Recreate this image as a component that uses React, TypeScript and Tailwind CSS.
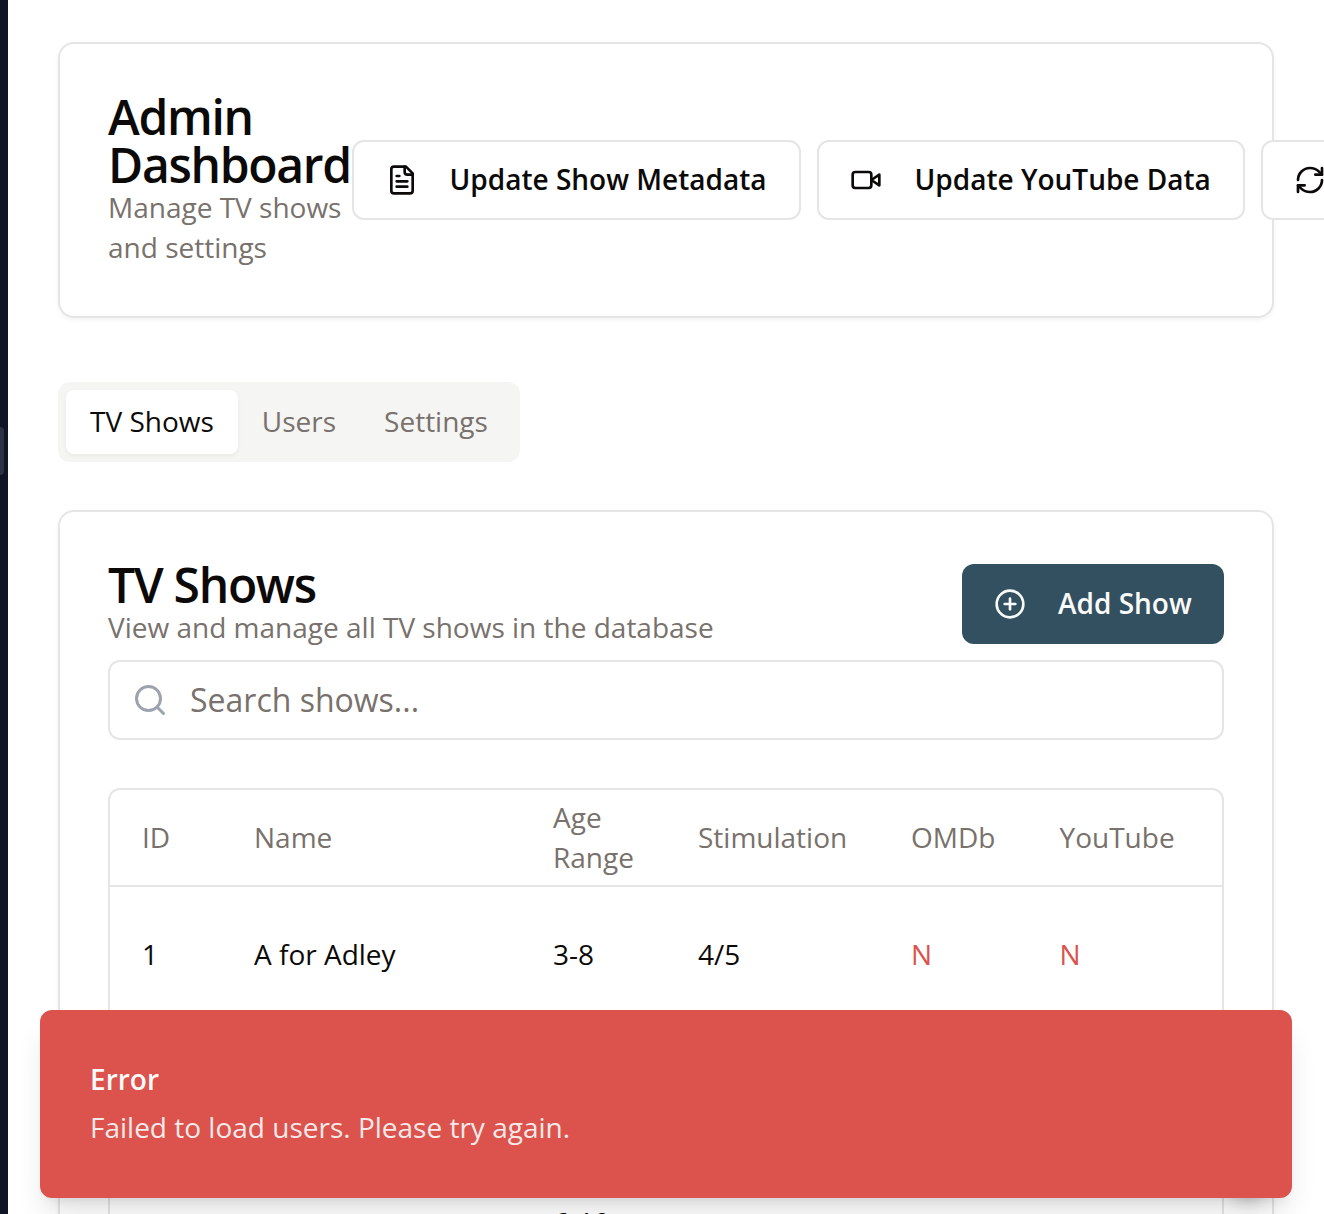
import React from "react";
import { CirclePlus, RefreshCw, Search } from "lucide-react";

const tabs = ["TV Shows", "Users", "Settings"];
const columns = ["ID", "Name", "Age Range", "Stimulation", "OMDb", "YouTube"];
const rows = [
  { height: "h-[137px]", cells: ["1", "A for Adley", "3-8", "4/5", "N", "N"] },
  { height: "h-[131px]", cells: ["", "", "", "", "", ""] },
  { height: "h-[137px]", cells: ["", "", "6-10", "", "", ""] },
];

const grid = "grid grid-cols-[112px_299px_145px_213px_148.5px_1fr] items-center pb-0.5";

function Icon({ children }: { children: React.ReactNode }) {
  return (
    <svg width="32" height="32" viewBox="0 0 24 24" fill="none" stroke="currentColor" strokeWidth="2" strokeLinecap="round" strokeLinejoin="round">
      {children}
    </svg>
  );
}

function DocumentIcon() {
  return (
    <Icon>
      <path d="M15 2H6a2 2 0 0 0-2 2v16a2 2 0 0 0 2 2h12a2 2 0 0 0 2-2V7Z" />
      <path d="M14 2v4a2 2 0 0 0 2 2h4" />
      <path d="M10 9H8M16 13H8M16 17H8" />
    </Icon>
  );
}

function CameraIcon() {
  return (
    <Icon>
      <path d="m22 8-6 4 6 4V8Z" />
      <rect x="2" y="6" width="14" height="12" rx="2" />
    </Icon>
  );
}

function OutlineButton({ icon, label, className }: { icon: React.ReactNode; label: string; className: string }) {
  return (
    <button className={`flex h-20 shrink-0 items-center rounded-xl border-2 border-[#e5e5e5] bg-white font-semibold whitespace-nowrap ${className}`}>
      {icon}
      <span className="pb-0.5">{label}</span>
    </button>
  );
}

function Heading({ title, subtitle }: { title: string; subtitle: string }) {
  return (
    <>
      <h1 className="pt-px text-[48px] leading-[48px] font-semibold tracking-[-1.3px]">{title}</h1>
      <p className="-mt-0.5 mb-px text-[#78716c]">{subtitle}</p>
    </>
  );
}

export default function App() {
  return (
    <div className="relative flex h-[1214px] w-[1324px] overflow-hidden bg-white font-['Open_Sans',sans-serif] text-[28px] leading-10 text-[#0c0a09]">
      <aside className="flex w-2 shrink-0 bg-[#0f1525] pt-[427px]">
        <div className="h-12 w-1 rounded-r-sm bg-[#2b3245]" />
      </aside>

      <main className="flex w-[1316px] shrink-0 flex-col pt-[42px] pl-[50px]">
        <section className="flex h-[276px] w-[1216px] shrink-0 items-center rounded-2xl border-2 border-[#e5e5e5] px-12 shadow-[0_2px_4px_rgba(0,0,0,0.05)]">
          <div className="w-[244px] shrink-0">
            <Heading title="Admin Dashboard" subtitle="Manage TV shows and settings" />
          </div>
          <div className="flex gap-4">
            <OutlineButton icon={<DocumentIcon />} label="Update Show Metadata" className="w-[449px] gap-[31.5px] pl-8" />
            <OutlineButton icon={<CameraIcon />} label="Update YouTube Data" className="w-[428px] gap-[32.5px] pl-[31px]" />
            <OutlineButton icon={<RefreshCw size={32} strokeWidth={2} />} label="Refresh" className="w-[240px] gap-8 pl-[31px]" />
          </div>
        </section>

        <nav className="mt-16 flex h-20 w-[462px] shrink-0 items-center rounded-xl bg-[#f5f5f4] p-2">
          {tabs.map((tab, i) => (
            <button
              key={tab}
              className={i === 0 ? "h-16 rounded-lg bg-white px-6 pb-0.5 shadow-[0_2px_4px_rgba(0,0,0,0.05)]" : "h-16 px-6 pb-0.5 text-[#78716c]"}
            >
              {tab}
            </button>
          ))}
        </nav>

        <section className="mt-12 h-[900px] w-[1216px] shrink-0 rounded-2xl border-2 border-[#e5e5e5] px-12 pt-12 shadow-[0_2px_4px_rgba(0,0,0,0.05)]">
          <div className="flex h-[88px] items-center justify-between">
            <div>
              <Heading title="TV Shows" subtitle="View and manage all TV shows in the database" />
            </div>
            <button className="flex h-20 w-[262px] items-center gap-8 rounded-xl bg-[#335061] pl-8 font-semibold text-[#fafaf9]">
              <CirclePlus size={32} strokeWidth={2} />
              <span className="pb-0.5">Add Show</span>
            </button>
          </div>

          <div className="mt-3 flex h-20 items-center rounded-xl border-2 border-[#e5e5e5] pl-[22px]">
            <Search size={36} className="text-[#9ca3af]" />
            <span className="ml-[22px] text-[32px] text-[#78716c]">Search shows...</span>
          </div>

          <div className="mt-12 h-[600px] rounded-xl border-2 border-[#e5e5e5]">
            <div className={`${grid} h-[97px] border-b-2 border-[#e5e5e5] text-[#78716c]`}>
              {columns.map((c) => (
                <div key={c} className="px-8">{c}</div>
              ))}
            </div>
            {rows.map((row, r) => (
              <div key={r} className={`${grid} ${row.height} border-b-2 border-[#e5e5e5]`}>
                {row.cells.map((cell, i) => (
                  <div key={i} className={i > 3 ? "px-8 text-[#dc524d]" : "px-8"}>{cell}</div>
                ))}
              </div>
            ))}
          </div>
        </section>
      </main>

      <div className="absolute top-[1170px] left-[1232px] h-6 w-8 rounded-full shadow-[0_8px_16px_rgba(0,0,0,0.2)]" />
      <div className="absolute top-[1010px] left-10 h-[188px] w-[1252px] rounded-xl border-2 border-[#dc524d] bg-[#dc524d] px-12 pt-[47px] text-[#fafaf9] shadow-[0_20px_30px_-6px_rgba(0,0,0,0.12),0_8px_12px_-8px_rgba(0,0,0,0.12)]">
        <div className="font-semibold">Error</div>
        <div className="mt-2 opacity-90">Failed to load users. Please try again.</div>
      </div>
    </div>
  );
}
